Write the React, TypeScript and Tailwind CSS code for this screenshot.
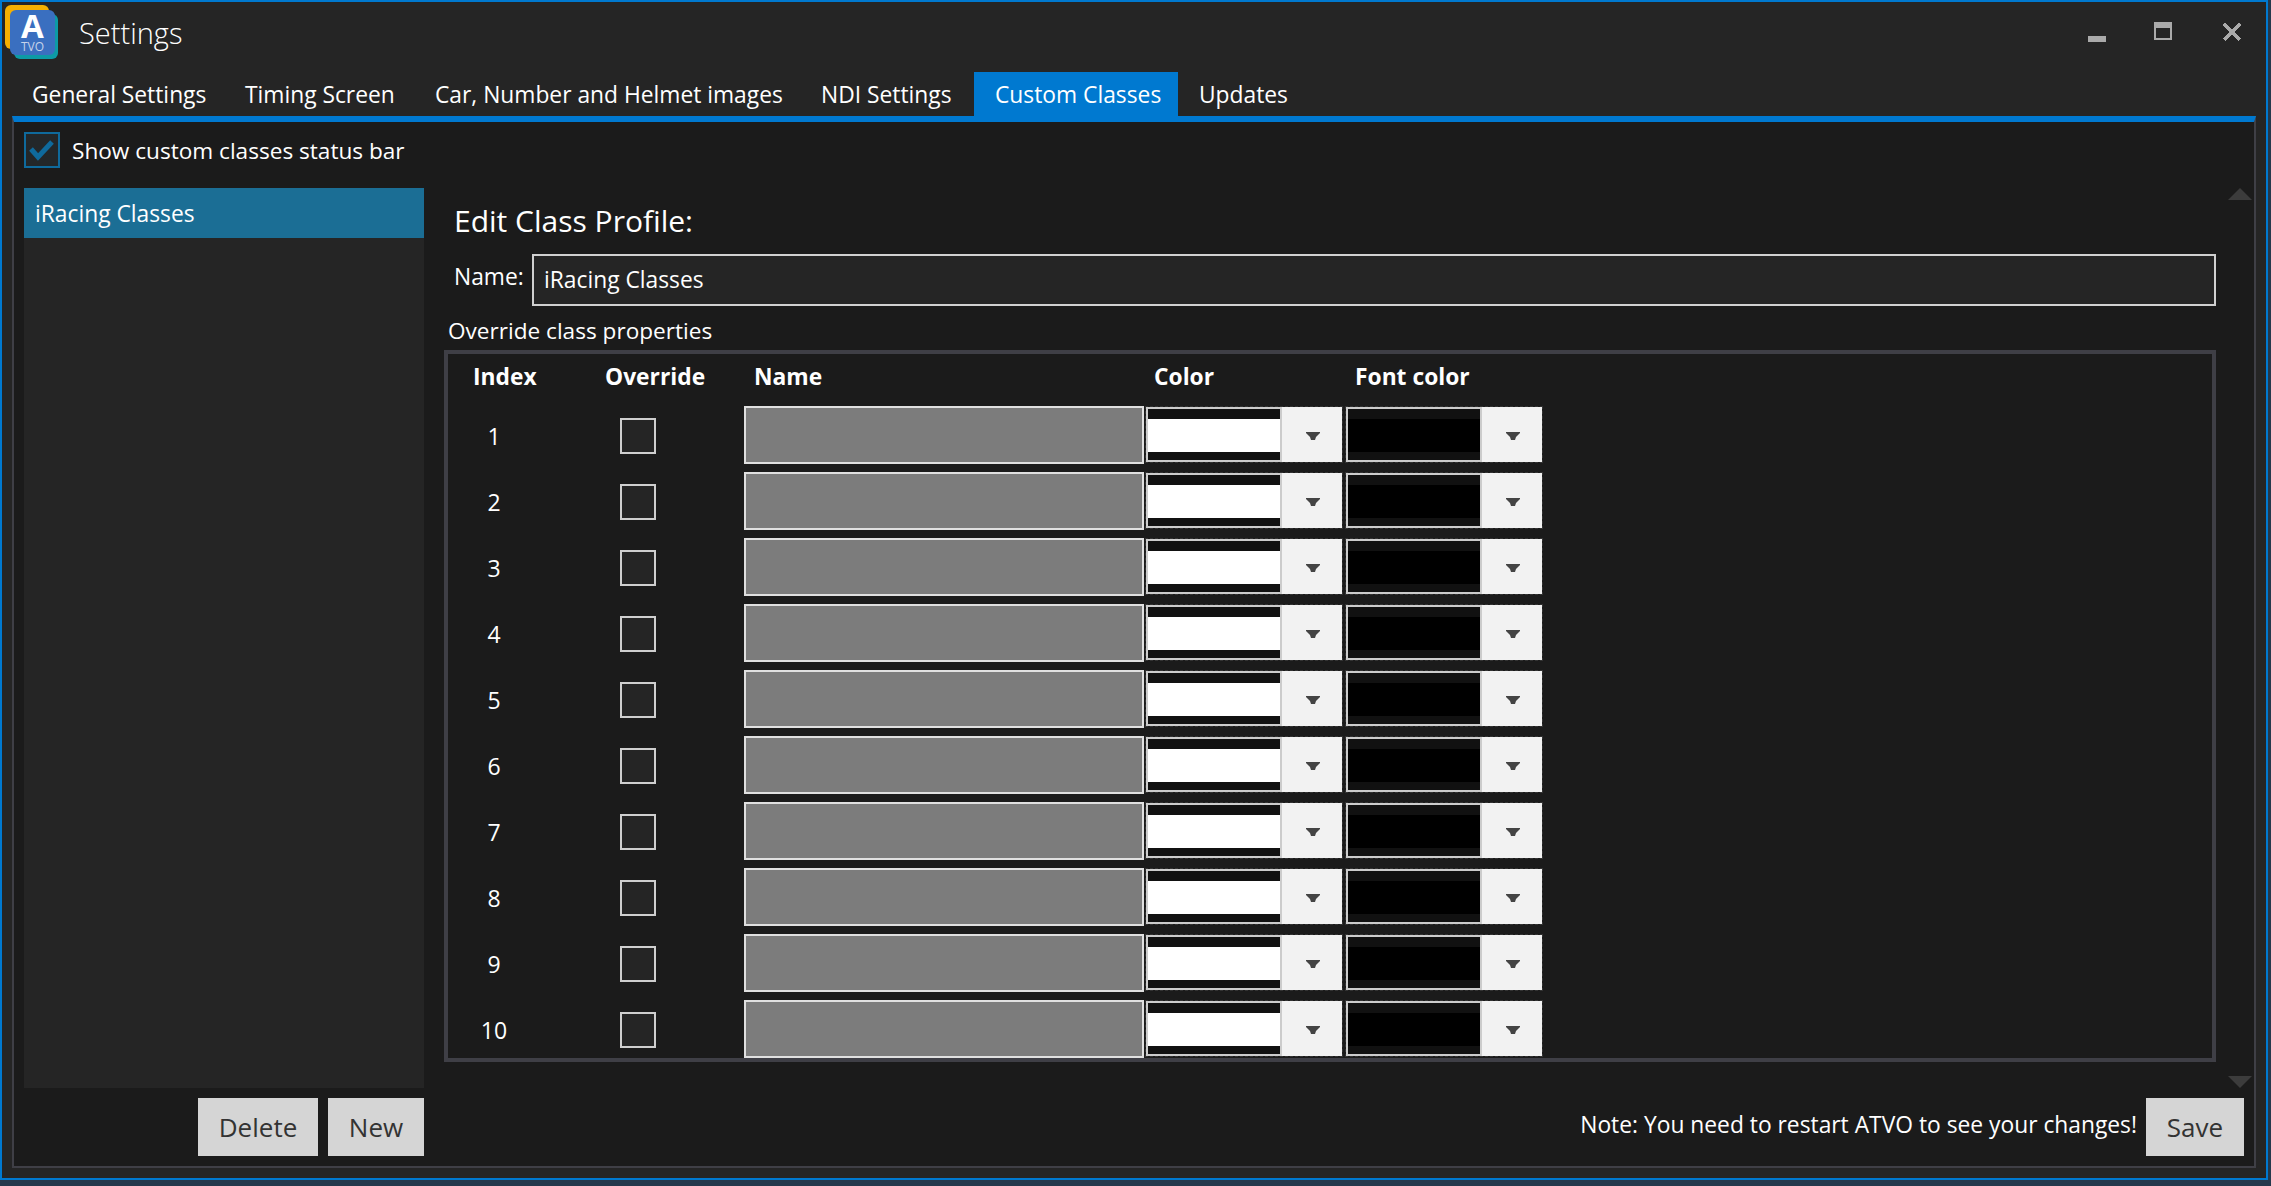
import React from 'react';

const tabs = [
    { label: 'General Settings', w: 'w-[213px] pl-[20px]' },
    { label: 'Timing Screen', w: 'w-[190px] pl-[20px]' },
    { label: 'Car, Number and Helmet images', w: 'w-[386px] pl-[20px]' },
    { label: 'NDI Settings', w: 'w-[173px] pl-[20px]' },
    { label: 'Custom Classes', w: 'w-[204px] pl-[21px] bg-[#0079d0]' },
    { label: 'Updates', w: 'w-[120px] pl-[21px]' },
];

const rows = [1, 2, 3, 4, 5, 6, 7, 8, 9, 10];

function Swatch({ fill }: { fill: string }) {
    return (
        <div className="flex h-[55px] w-[196px] mt-[1px] outline-1 outline-dashed outline-[#333333]">
            <div className="flex flex-col h-full w-[136px] border-2 border-[#cccccc]">
                <div className="h-[10px] bg-[#111111]" />
                <div className={`flex-1 ${fill}`} />
                <div className="h-[8px] bg-[#111111]" />
            </div>
            <div className="flex-1 bg-[#f2f2f2] flex items-center justify-center pt-[3px] pl-[2px]">
                <svg width="14" height="8" viewBox="0 0 14 8"><path d="M0 0h14v1l-4 4-1 3H5L4 5 0 1z" fill="#444444" /></svg>
            </div>
        </div>
    );
}

function Row({ n }: { n: number }) {
    return (
        <div className="flex items-start h-[58px] shrink-0">
            <div className="w-[92px] text-center text-[23px] leading-[60px]">{n}</div>
            <div className="w-[204px] pl-[80px] pt-[12px]">
                <div className="size-[36px] border-2 border-[#cfcfcf] bg-[#252525]" />
            </div>
            <div className="w-[400px] h-[58px] border-2 border-[#e0e0e0] bg-[#7c7c7c]" />
            <div className="ml-[2px]"><Swatch fill="bg-white" /></div>
            <div className="ml-[4px]"><Swatch fill="bg-black" /></div>
        </div>
    );
}

export default function App() {
    return (
        <div className="w-[2271px] h-[1186px] bg-[#24394c] text-white overflow-hidden" style={{ fontFamily: '"Open Sans", "Noto Sans", sans-serif' }}>
            <div className="w-[2268px] h-[1180px] border-2 border-[#0079d0] bg-[#252525] flex flex-col">
                <div className="flex items-start h-[70px] shrink-0">
                    <svg width="54" height="54" viewBox="0 0 54 54" className="ml-[3px] mt-[3px] shrink-0 overflow-visible">
                        <rect x="0" y="0" width="44" height="44" rx="6" fill="#f5b000" />
                        <rect x="9" y="9" width="44" height="45" rx="6" fill="#0d9aa6" />
                        <rect x="5" y="5" width="45" height="45" rx="6" fill="#3a6fc0" />
                        <text x="27.5" y="33" textAnchor="middle" fontSize="33" fontWeight="700" fill="#ffffff" fontFamily="Open Sans">A</text>
                        <text x="27.5" y="46" textAnchor="middle" fontSize="12" fill="#c6d3ea" fontFamily="Open Sans">TVO</text>
                    </svg>
                    <div className="ml-[20px] mt-[11px] text-[29px] leading-[40px] font-light">Settings</div>
                    <div className="ml-auto flex items-start">
                        <div className="w-[18px] h-[6px] bg-[#aaaaaa] mt-[34px] mr-[48px]" />
                        <div className="w-[18px] h-[18px] border-2 border-t-[6px] border-[#aaaaaa] mt-[20px] mr-[50px]" />
                        <svg width="20" height="20" viewBox="0 0 20 20" shapeRendering="crispEdges" className="mt-[20px] mr-[24px]"><path d="M2 2l16 16M18 2L2 18" stroke="#aaaaaa" strokeWidth="4" /></svg>
                    </div>
                </div>
                <div className="flex items-end h-[44px] shrink-0 pl-[10px] text-[22.8px]">
                    {tabs.map((t) => (
                        <div key={t.label} className={`h-[44px] leading-[45px] whitespace-nowrap ${t.w}`}>{t.label}</div>
                    ))}
                </div>
                <div className="ml-[10px] w-[2244px] h-[1052px] shrink-0 border-t-[6px] border-t-[#0079d0] border-x-2 border-b-2 border-x-[#3f3f46] border-b-[#3f3f46] bg-[#1b1b1b] flex flex-col">
                    <div className="flex items-start h-[66px] pl-[10px] pt-[10px] shrink-0">
                        <div className="size-[36px] border-2 border-[#0f6a9c] bg-[#232729]">
                            <svg width="32" height="32" viewBox="0 0 32 32"><path d="M5 15l7 8L26 8" fill="none" stroke="#0f6a9c" strokeWidth="5" /></svg>
                        </div>
                        <span className="ml-[12px] text-[22.6px] leading-[38px]">Show custom classes status bar</span>
                    </div>
                    <div className="flex flex-1 min-h-0">
                        <div className="w-[400px] ml-[10px] flex flex-col shrink-0">
                            <div className="h-[900px] bg-[#252525] shrink-0">
                                <div className="h-[50px] bg-[#1b6e95] pl-[11px] text-[22.8px] leading-[52px]">iRacing Classes</div>
                            </div>
                            <div className="flex justify-end gap-[10px] mt-[10px]">
                                <button className="w-[120px] h-[58px] bg-[#d5d5d5] text-[#333333] text-[26px]">Delete</button>
                                <button className="w-[96px] h-[58px] bg-[#d5d5d5] text-[#333333] text-[26px]">New</button>
                            </div>
                        </div>
                        <div className="flex-1 min-w-0 flex flex-col">
                            <div className="flex h-[900px] shrink-0">
                                <div className="flex-1 min-w-0 pl-[20px] flex flex-col">
                                    <div className="text-[30px] leading-[42px] mt-[12px] ml-[10px] h-[40px]">Edit Class Profile:</div>
                                    <div className="flex items-start mt-[14px] ml-[10px]">
                                        <span className="text-[22.8px] w-[78px] leading-[46px]">Name:</span>
                                        <div className="flex-1 h-[52px] border-2 border-[#d0d0d0] bg-[#252525] pl-[10px] text-[22.8px] leading-[47px]">iRacing Classes</div>
                                    </div>
                                    <div className="text-[22.6px] mt-[9px] ml-[4px] leading-[32px]">Override class properties</div>
                                    <div className="border-[4px] border-[#3f3f46] h-[712px] mt-[3px] shrink-0 overflow-hidden">
                                        <div className="flex h-[44px] mb-[8px] text-[22.8px] font-bold leading-[46px]">
                                            <div className="w-[157px] pl-[25px]">Index</div>
                                            <div className="w-[149px]">Override</div>
                                            <div className="w-[400px]">Name</div>
                                            <div className="w-[201px]">Color</div>
                                            <div>Font color</div>
                                        </div>
                                        <div className="flex flex-col gap-[8px]">
                                            {rows.map((n) => <Row key={n} n={n} />)}
                                        </div>
                                    </div>
                                </div>
                                <div className="w-[38px] shrink-0 pl-[12px] flex flex-col justify-between">
                                    <svg width="24" height="12" viewBox="0 0 24 12"><path d="M12 0l12 12H0z" fill="#3c3c3c" /></svg>
                                    <svg width="24" height="12" viewBox="0 0 24 12"><path d="M12 12L24 0H0z" fill="#3c3c3c" /></svg>
                                </div>
                            </div>
                            <div className="flex justify-end items-start mt-[10px] pr-[10px]">
                                <span className="text-[22.8px] leading-[54px] mr-[9px]">Note: You need to restart ATVO to see your changes!</span>
                                <button className="w-[98px] h-[58px] bg-[#d5d5d5] text-[#333333] text-[26px]">Save</button>
                            </div>
                        </div>
                    </div>
                </div>
            </div>
        </div>
    );
}
